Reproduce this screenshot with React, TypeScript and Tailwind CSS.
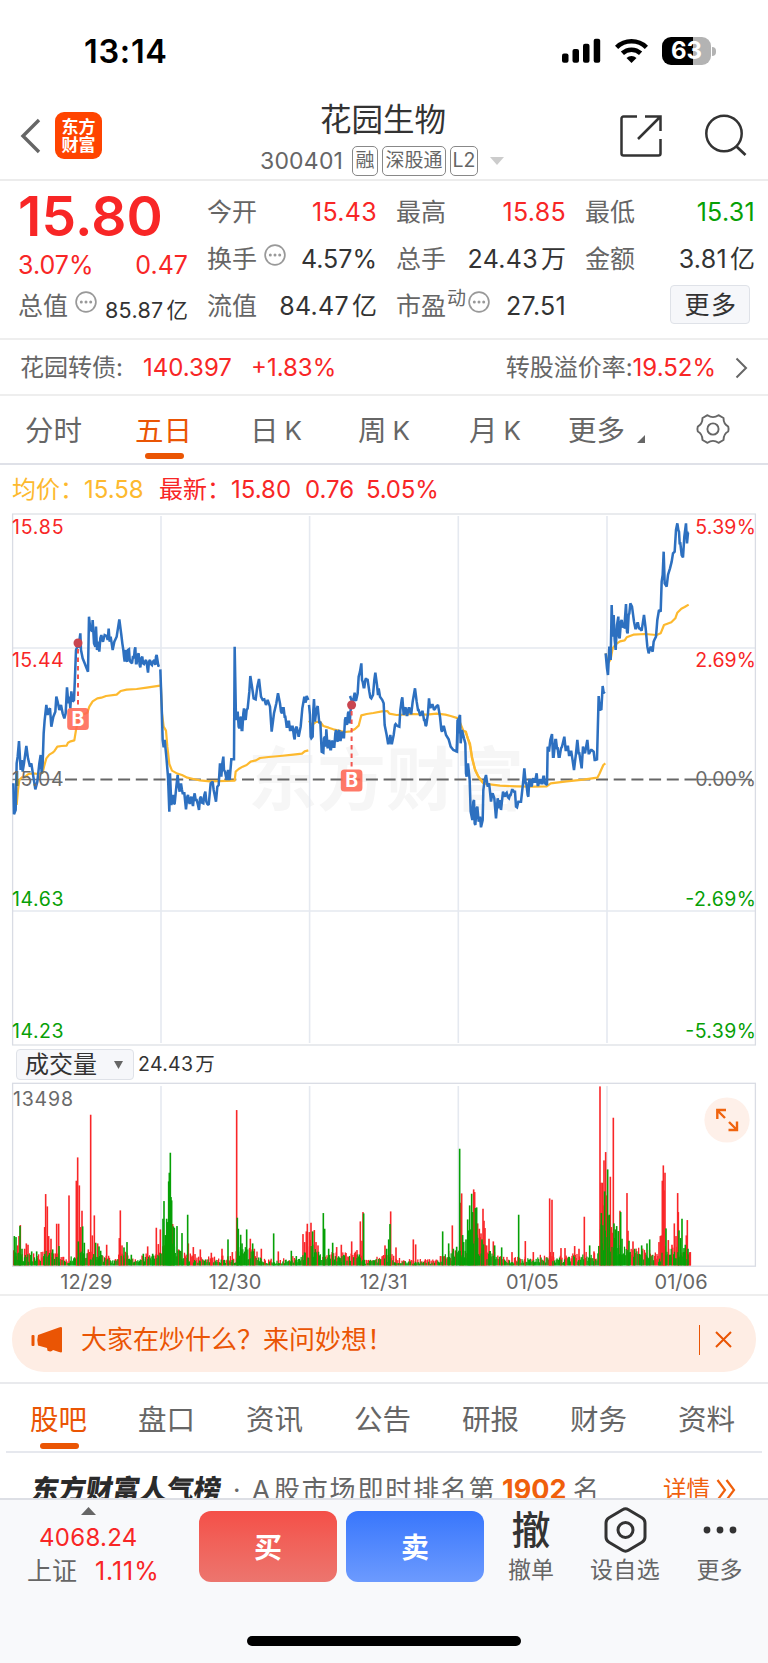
import React from "react";

type Stat = { label: string; value: string; unit?: string; tone?: string };

const DAY_1 =
  "40,850 42,943 47,930 50,790 53,770 57,723 62,810 65,780 68,815 72,790 79,738 84,775 90,800 94,790 100,830 106,868 112,845 118,790 122,765 125,820 128,790 131,700 134,660 139,615 143,645 146,630 150,625 154,680 160,650 166,635 169,590 173,605 178,630 183,615 188,640 193,655 197,640 201,562 205,610 208,590 211,625 214,574 218,605 222,600 225,530 228,450 232,440 236,440 241,400 243,450 248,475 254,490 258,500 264,515 267,350 270,380 276,395 278,360 282,430 286,440 288,380 291,450 294,425 298,455 301,415 304,405 307,420 309,425 314,405 320,408 323,420 326,386 329,425 332,410 335,430 338,450 343,425 350,410 358,358 364,405 367,430 370,450 372,470 374,485 378,450 380,482 382,485 384,450 387,448 389,478 391,485 396,490 399,468 402,475 404,450 406,442 408,490 410,490 413,465 416,460 419,495 421,502 424,475 427,470 429,490 432,492 435,485 438,480 441,495 444,518 447,485 450,480 453,492 456,495 459,485 463,480 466,495 468,470 470,465 475,497 479,498";
const DAY_2 =
  "481,508 485,620 488,720 491,742 494,720 499,770 504,830 508,935 510,820 514,915 517,890 519,885 522,912 524,910 527,880 529,860 533,825 536,860 539,875 543,850 546,870 548,880 553,880 558,928 562,890 564,885 567,905 569,912 572,895 574,890 577,910 579,918 582,890 584,880 587,900 590,900 594,915 597,930 600,895 603,890 606,908 610,910 613,885 616,875 619,905 622,912 626,915 632,850 638,845 641,870 643,880 648,905 652,860 656,855 660,790 664,830 667,790 670,770 672,810 675,815 680,840 684,810 687,835 689,840 694,778 702,778 704,440 708,660 711,640 713,635 716,680 718,685 721,655 723,650 725,690 727,690 730,640 732,625 735,655 737,660 740,630 743,625 748,575 751,528 756,560 761,595 767,598 772,560 777,537 783,590 788,600 793,598 798,615 803,600 810,620 815,695 822,640 829,610 834,580 840,610 843,635 846,640 848,625 851,625 854,650 856,650 860,680 862,680 865,665 867,665 870,690 872,690 875,680 878,680 882,710 884,718 887,685 890,680 896,710 902,680 907,625 913,590 917,608 920,588 925,600";
const DAY_3 =
  "27,315 30,345 32,410 34,415 38,410 40,330 42,297 45,365 49,330 53,318 58,370 61,365 65,455 70,458 72,415 75,410 77,440 79,388 83,445 86,425 88,420 91,448 93,448 96,425 98,422 101,440 103,440 106,400 108,390 111,420 113,425 116,395 118,390 120,420 122,420 125,400 127,395 130,412 132,412 135,360 137,352 141,375 144,340 146,335 149,370 153,315 156,305 150,288 158,310 164,278 166,300 168,302 173,280 176,230 180,215 184,190 186,240 188,245 191,262 193,262 196,240 198,235 201,240 203,240 208,275 211,292 214,295 219,285 223,240 226,218 231,255 234,285 236,265 240,290 247,300 251,310 254,375 260,405 264,430 266,430 271,405 274,430 276,430 281,405 285,375 287,372 292,378 298,380 301,330 305,300 307,292 311,345 315,325 317,322 320,345 322,345 326,325 328,325 332,340 334,340 338,305 345,265 350,305 354,330 356,330 360,345 362,345 366,335 368,335 372,360 374,360 377,378 379,375 384,340 387,295 390,322 392,322 396,315 398,315 402,330 406,325 408,320 414,315 420,350 424,390 426,395 430,380 432,380 438,405 446,418 452,440 460,450 471,455 474,355";
const DAY_4 =
  "20,757 23,660 26,700 28,650 30,645 32,730 36,690 42,715 46,730 48,820 50,830 54,790 59,840 62,935 67,960 70,905 72,900 74,970 76,975 80,925 82,920 86,965 88,955 90,950 93,982 98,960 100,870 104,840 108,825 113,860 117,850 119,865 123,905 126,885 128,880 133,895 138,955 143,895 148,925 151,900 153,930 159,875 163,885 165,890 168,880 170,878 174,892 177,895 180,885 182,885 186,870 188,870 192,875 195,875 198,920 201,922 205,905 207,905 213,905 219,850 223,805 227,850 229,850 233,885 235,890 238,840 240,840 245,860 248,840 250,835 253,845 255,845 260,820 263,855 265,855 269,840 271,840 274,850 276,850 280,830 282,830 284,850 286,850 291,855 293,740 297,755 301,720 306,702 309,770 311,770 316,720 318,720 321,745 323,745 326,770 329,770 333,745 336,740 343,710 347,750 349,750 352,740 354,740 357,765 359,765 362,755 364,755 372,810 378,760 382,720 386,760 388,760 395,805 399,740 403,755 405,760 412,720 416,760 418,760 423,750 425,750 431,755 434,780 436,780 441,778 446,588 449,625 454,630 458,558 461,578 465,575";
const DAY_5 =
  "467,460 471,505 474,525 478,440 482,480 485,315 488,410 491,345 494,420 497,450 501,375 505,350 507,410 509,415 513,365 515,360 518,380 523,382 528,312 531,395 533,400 536,345 538,340 541,310 546,320 552,365 556,385 558,385 562,370 564,370 567,385 569,385 575,392 582,345 587,385 592,440 596,460 602,440 608,455 611,425 613,420 618,410 622,360 627,330 632,335 635,245 638,225 641,155 644,250 650,260 654,225 660,205 665,185 669,160 674,155 678,90 682,70 685,90 687,95 689,130 691,130 695,165 699,172 703,110 708,70 711,130 714,98 716,98";

const AVG_1 =
  "50,915 54,870 58,840 66,832 76,830 85,822 100,820 115,822 128,818 132,800 139,775 148,764 158,758 164,752 172,740 185,738 200,737 204,728 212,724 223,721 228,690 235,660 245,645 262,638 268,620 278,604 292,595 304,593 318,588 350,584 362,573 380,569 410,567 440,563 480,557";
const AVG_2 =
  "482,540 486,640 491,680 498,692 502,740 508,792 516,812 532,821 546,825 562,833 580,837 600,841 630,844 704,842 707,815 716,807 728,800 740,795 752,785 768,781 780,774 806,771 840,768 880,764 906,761 914,754 925,751";
const AVG_3 =
  "27,362 35,376 48,366 60,365 70,378 86,383 100,388 116,392 135,396 152,394 165,387 176,377 184,346 200,342 220,339 246,334 262,333 268,341 290,345 340,342 380,344 410,341 436,344 452,348 475,355 490,392 498,395 502,412 510,430 516,470 524,505 534,528 548,546";
const AVG_4 =
  "45,693 52,710 60,738 66,775 76,812 88,835 100,850 120,853 150,857 200,859 250,860 290,859 302,850 350,844 400,839 442,833 448,822 460,795 466,790";
const AVG_5 =
  "467,460 474,490 482,478 488,445 497,433 510,424 524,421 530,412 550,404 585,402 620,405 632,400 642,375 664,367 676,355 682,338 694,326 704,321 716,314";

type Spike = [number, number, "r" | "g"];

const SPIKES: Spike[] = [
  [43, 88, "g"], [48, 85, "g"], [53, 60, "r"], [57, 88, "r"], [61, 121, "r"], [60, 118, "g"], [66, 50, "g"], [74, 50, "r"], [79, 66, "r"], [84, 62, "r"], [95, 42, "g"], [110, 42, "g"],
  [134, 115, "r"], [137, 214, "r"], [142, 177, "r"], [146, 88, "r"], [153, 80, "r"], [158, 48, "g"], [170, 125, "r"], [176, 125, "r"], [177, 58, "g"], [207, 210, "r"],
  [229, 254, "r"], [233, 324, "r"], [238, 240, "r"], [235, 72, "g"], [242, 115, "r"], [246, 164, "r"], [248, 117, "g"], [253, 68, "g"], [265, 48, "r"], [272, 452, "r"], [277, 90, "r"], [283, 150, "r"], [287, 68, "g"], [293, 66, "r"], [297, 57, "g"], [302, 44, "g"], [320, 62, "r"],
  [358, 82, "r"], [361, 165, "r"], [366, 60, "r"], [372, 54, "g"], [381, 70, "g"], [394, 32, "g"], [430, 35, "g"], [443, 57, "r"], [458, 35, "g"], [469, 113, "r"], [475, 64, "r"], [481, 108, "r"],
  [489, 140, "g"], [492, 193, "g"], [496, 91, "g"], [500, 140, "g"], [503, 130, "g"], [506, 252, "g"], [508, 278, "g"], [511, 338, "g"], [513, 205, "g"], [515, 195, "g"], [518, 124, "r"], [520, 117, "g"], [523, 113, "g"], [531, 118, "g"], [536, 48, "r"], [546, 97, "g"], [563, 152, "g"], [565, 66, "r"], [580, 55, "r"], [585, 34, "r"], [601, 48, "r"], [634, 38, "r"], [666, 50, "r"], [684, 78, "g"], [697, 40, "r"],
  [710, 466, "r"], [712, 143, "g"], [715, 110, "g"], [722, 92, "g"], [726, 66, "g"], [740, 108, "g"], [751, 80, "r"], [758, 66, "g"], [763, 50, "r"], [784, 50, "r"], [821, 96, "g"], [835, 42, "r"], [874, 44, "g"], [889, 28, "g"], [909, 94, "r"], [914, 70, "r"], [919, 102, "r"], [922, 125, "r"], [928, 100, "r"], [933, 128, "r"], [938, 102, "g"], [943, 106, "r"], [948, 70, "r"], [954, 60, "r"], [970, 157, "g"], [974, 110, "g"], [986, 50, "g"], [998, 68, "g"], [1010, 55, "r"], [1024, 62, "r"], [1055, 72, "r"], [1071, 46, "r"], [1081, 132, "r"], [1086, 74, "r"], [1089, 160, "r"], [1091, 156, "g"],
  [1155, 60, "r"], [1160, 50, "g"], [1166, 78, "g"], [1170, 124, "g"], [1172, 162, "r"], [1188, 54, "r"], [1240, 78, "r"], [1247, 63, "r"], [1328, 102, "g"], [1346, 66, "g"], [1357, 120, "r"], [1360, 50, "g"], [1370, 56, "g"],
  [1379, 350, "g"], [1382, 188, "r"], [1385, 216, "r"], [1388, 91, "g"], [1391, 70, "g"], [1398, 78, "g"], [1403, 138, "g"], [1406, 105, "g"], [1409, 180, "g"], [1412, 108, "g"], [1415, 215, "g"], [1418, 160, "g"], [1421, 228, "r"], [1424, 220, "r"], [1426, 172, "g"], [1430, 174, "g"], [1433, 126, "r"], [1438, 110, "r"], [1443, 96, "r"], [1446, 78, "g"], [1449, 170, "r"], [1452, 134, "r"], [1455, 112, "r"], [1460, 60, "r"], [1467, 80, "r"], [1480, 72, "r"], [1484, 60, "g"], [1505, 54, "g"], [1536, 40, "r"], [1556, 152, "g"], [1576, 73, "r"],
  [1600, 40, "r"], [1649, 201, "r"], [1656, 197, "r"], [1651, 40, "r"], [1660, 40, "r"], [1683, 52, "r"], [1695, 52, "r"], [1724, 58, "r"], [1737, 50, "r"], [1753, 146, "r"], [1769, 60, "g"], [1782, 42, "r"],
  [1800, 537, "r"], [1803, 248, "r"], [1804, 157, "g"], [1807, 248, "r"], [1809, 180, "r"], [1812, 315, "r"], [1814, 222, "g"], [1817, 340, "r"], [1820, 210, "r"], [1823, 288, "g"], [1826, 150, "r"], [1828, 152, "g"], [1831, 266, "r"], [1834, 115, "r"], [1837, 98, "r"], [1840, 443, "r"], [1842, 126, "g"], [1846, 108, "g"], [1850, 118, "g"], [1855, 103, "g"], [1860, 164, "r"], [1862, 160, "g"], [1866, 80, "g"], [1881, 217, "r"], [1884, 104, "r"], [1887, 74, "g"], [1899, 72, "r"], [1904, 50, "g"], [1925, 60, "g"], [1941, 66, "g"], [1949, 78, "g"],
  [1977, 70, "r"], [1981, 88, "r"], [1984, 90, "r"], [1987, 254, "r"], [1990, 300, "r"], [1992, 225, "r"], [1995, 278, "r"], [1998, 111, "g"], [2005, 76, "r"], [2016, 62, "r"], [2023, 126, "r"], [2028, 88, "r"], [2033, 217, "r"], [2035, 160, "r"], [2037, 105, "g"], [2042, 82, "g"], [2046, 140, "g"], [2052, 52, "g"], [2056, 62, "g"], [2059, 90, "r"], [2062, 136, "r"], [2064, 50, "g"], [2071, 40, "r"],
];

// Quiet trading volume between the peaks: [position, typical height]
const ENVELOPE: [number, number][] = [
  [40, 40], [90, 30], [120, 24], [135, 50], [180, 26], [200, 8], [225, 40], [265, 38], [295, 34], [315, 24], [345, 14], [370, 38], [390, 18], [440, 26], [485, 36], [500, 80], [520, 60], [550, 32], [600, 18], [660, 20], [705, 18], [715, 60], [760, 40], [800, 10], [860, 16], [905, 24], [930, 70], [950, 40], [970, 34], [1020, 28], [1080, 34], [1095, 14], [1180, 26], [1200, 12], [1310, 10], [1330, 30], [1375, 44], [1400, 45], [1420, 110], [1445, 66], [1470, 40], [1510, 18], [1550, 16], [1600, 22], [1660, 22], [1700, 22], [1730, 30], [1790, 32], [1805, 130], [1840, 90], [1865, 60], [1900, 44], [1950, 36], [1975, 26], [2000, 50], [2025, 44], [2050, 50], [2072, 36],
];

function envelopeAt(x: number) {
  for (let i = 1; i < ENVELOPE.length; i++) {
    const [x1, h1] = ENVELOPE[i];
    const [x0, h0] = ENVELOPE[i - 1];
    if (x <= x1) return h0 + ((h1 - h0) * (x - x0)) / (x1 - x0);
  }
  return 30;
}

function quietBars(): Spike[] {
  const out: Spike[] = [];
  let seed = 20260106;
  const next = () => {
    seed = (seed * 1103515245 + 12345) % 2147483648;
    return seed / 2147483648;
  };
  for (let x = 41; x < 2073; x += 2.5) {
    const e = envelopeAt(x);
    const a = next();
    const b = next();
    out.push([x, Math.max(4, e * (0.35 + a * 0.75)), b < 0.36 ? "r" : "g"]);
  }
  return out;
}

const QUIET = quietBars();

function Line({ pts, avg = false }: { pts: string; avg?: boolean }) {
  return (
    <polyline
      points={pts}
      fill="none"
      stroke={avg ? "#fdb92e" : "#2d70c0"}
      strokeWidth={avg ? 6.6 : 7.6}
      strokeLinejoin={avg ? "round" : "miter"}
      strokeMiterlimit={2}
    />
  );
}

function Marker({ x, dotY, boxY }: { x: number; dotY: number; boxY: number }) {
  return (
    <g>
      <line x1={x} x2={x} y1={dotY + 6} y2={boxY - 1} stroke="#f2554f" strokeWidth="2" strokeDasharray="4.5 4" />
      <circle cx={x} cy={dotY} r="4.5" fill="#c9454f" />
      <rect x={x - 10.8} y={boxY} width="21.6" height="22" rx="3.5" fill="#ff6552" fillOpacity=".87" />
      <text x={x} y={boxY + 17.8} textAnchor="middle" fontSize="19.5" fontWeight="700" fill="#fff">B</text>
    </g>
  );
}

function PriceChart() {
  const left: [number, string, string][] = [
    [534, "15.85", "#f82626"], [666.5, "15.44", "#f82626"], [786, "15.04", "#6a6a6a"], [905.7, "14.63", "#07a006"], [1037.7, "14.23", "#07a006"],
  ];
  const right: [number, string, string][] = [
    [534, "5.39%", "#f82626"], [666.5, "2.69%", "#f82626"], [786, "0.00%", "#6a6a6a"], [905.7, "-2.69%", "#07a006"], [1037.7, "-5.39%", "#07a006"],
  ];
  return (
    <svg className="block h-[535px] w-full" viewBox="0 512 768 535" fontFamily="Inter, 'Noto Sans CJK SC', sans-serif">
      <text x="386" y="805" textAnchor="middle" fontSize="69" fontWeight="700" fill="#f6f6f6">东方财富</text>
      <path d="M161 516V1043M309.6 516V1043M458.3 516V1043M607 516V1043M12.5 648H755M12.5 911H755" stroke="#e5e9f0" strokeWidth="1.6" />
      <path d="M12 514H756M12 1045H756" stroke="#e9ebee" strokeWidth="2" />
      <path d="M12.6 514V1045M755.4 514V1045" stroke="#d9dce4" strokeWidth="1.3" />
      <path d="M12.5 779.5H60" stroke="#777" strokeWidth="1.6" />
      <path d="M65 779.5H696" stroke="#666" strokeWidth="2" strokeDasharray="12 5.7" />
      <path d="M696 779.5H752" stroke="#777" strokeWidth="1.6" />
      <g transform="translate(0 500) scale(.33333)">
        <Line pts={AVG_1} avg />
        <Line pts={AVG_2} avg />
        <Line pts={DAY_1} />
        <Line pts={DAY_2} />
      </g>
      <g transform="translate(300 600) scale(.33333)">
        <Line pts={AVG_3} avg />
        <Line pts={DAY_3} />
      </g>
      <g transform="translate(450 500) scale(.33333)">
        <Line pts={AVG_4} avg />
        <Line pts={AVG_5} avg />
        <Line pts={DAY_4} />
        <Line pts={DAY_5} />
      </g>
      <Marker x={78} dotY={643} boxY={708} />
      <Marker x={351.6} dotY={705} boxY={769.4} />
      {left.map(([y, t, c]) => (
        <text key={t} x="12" y={y} fontSize="19.5" fill={c} textLength="51.5">{t}</text>
      ))}
      {right.map(([y, t, c]) => (
        <text key={t} x="755.8" y={y} fontSize="19.5" fill={c} textAnchor="end" textLength={t.startsWith("-") ? 70.5 : 60.5}>{t}</text>
      ))}
    </svg>
  );
}

function VolumeChart() {
  return (
    <svg className="block h-[187px] w-full" viewBox="0 1081 768 187" fontFamily="Inter, sans-serif">
      <path d="M161 1086V1265M309.6 1086V1265M458.3 1086V1265M607 1086V1265" stroke="#e5e9f0" strokeWidth="1.6" />
      <rect x="12.6" y="1083.3" width="742.8" height="182.9" fill="none" stroke="#d9dce4" strokeWidth="1.3" />
      <g transform="translate(0 1265.4) scale(.33333)">
        {QUIET.filter((b) => b[2] === "r").map(([x, h], i) => (
          <rect key={i} x={x - 2} y={-h - 8} width="4" height={h + 8} fill="#f92628" />
        ))}
        {SPIKES.filter((b) => b[2] === "r").map(([x, h], i) => (
          <rect key={i} x={x - 2.4} y={-h} width="4.8" height={h} fill="#f92628" />
        ))}
        {QUIET.filter((b) => b[2] === "g").map(([x, h], i) => (
          <rect key={i} x={x - 1.8} y={-h} width="3.6" height={h} fill="#06a006" />
        ))}
        {SPIKES.filter((b) => b[2] === "g").map(([x, h], i) => (
          <rect key={i} x={x - 2.4} y={-h} width="4.8" height={h} fill="#06a006" />
        ))}
      </g>
      <text x="13" y="1105.8" fontSize="19.5" fill="#6a6a6a" textLength="60">13498</text>
      <circle cx="727" cy="1120" r="22.6" fill="#fef0e9" />
      <path d="M726 1110H717.300V1119M717.5 1110.5L725 1118M737 1121.500V1130H728.500M736.500 1129.500L729 1122" fill="none" stroke="#f0640f" strokeWidth="2.400" />
    </svg>
  );
}

function Info({ className = "" }: { className?: string }) {
  return (
    <svg className={`size-[22px] shrink-0 ${className}`} viewBox="0 0 22 22">
      <circle cx="11" cy="11" r="9.9" fill="none" stroke="#999" strokeWidth="1.7" />
      <circle cx="6.300" cy="11" r="1.500" fill="#999" />
      <circle cx="11" cy="11" r="1.500" fill="#999" />
      <circle cx="15.700" cy="11" r="1.500" fill="#999" />
    </svg>
  );
}

function StatCell({ label, value, unit, tone = "" }: Stat) {
  return (
    <div className="flex h-[47px] items-center">
      <span className="text-[#666]">{label}</span>
      <span className={`ml-auto tracking-[0.3px] ${tone}`}>{value}</span>
      {unit && <span className="ml-[3px]">{unit}</span>}
    </div>
  );
}

function StatusBar() {
  return (
    <div className="flex h-[94px] items-start justify-between pt-[35px] pr-[52px] pl-[84px]">
      <div className="text-[32.500px] leading-[34px] font-semibold tracking-[0.700px] text-black">13:14</div>
      <div className="flex items-center pt-[2px]">
        <svg className="h-[28px] w-[39px]" viewBox="0 0 39 28">
          <rect x="0" y="16.500" width="6.500" height="9.300" rx="2" />
          <rect x="10.500" y="12" width="6.500" height="13.800" rx="2" />
          <rect x="21" y="6.800" width="6.500" height="19" rx="2" />
          <rect x="31.700" y="1.700" width="6.500" height="24.100" rx="2" />
        </svg>
        <svg className="ml-[14px] h-[28px] w-[33px]" viewBox="0 0 33 28">
          <path d="M1.600 10.300a21.500 21.500 0 0 1 29.800 0" fill="none" stroke="#000" strokeWidth="4.600" />
          <path d="M7.400 16.300a13.300 13.300 0 0 1 18.200 0" fill="none" stroke="#000" strokeWidth="4.600" />
          <path d="M16.500 26l-5-5a7.500 7.500 0 0 1 10 0z" />
        </svg>
        <div className="ml-[14px] flex h-[28px] w-[49px] items-center justify-center rounded-[9px] bg-linear-to-r from-black from-63% to-[#b3b3b3] to-63% text-[24px] leading-[28px] font-bold text-white">63</div>
        <div className="ml-[1px] h-[9px] w-[4px] rounded-r-full bg-[#b3b3b3]" />
      </div>
    </div>
  );
}

function NavBar() {
  return (
    <div className="flex h-[87px] items-start border-b-2 border-[#ececec]">
      <svg className="mt-[24px] ml-[19px] h-[36px] w-[22px]" viewBox="0 0 22 36">
        <path d="M20 2L4 18l16 16" fill="none" stroke="#666" strokeWidth="3.400" />
      </svg>
      <div className="mt-[18px] ml-[14px] flex size-[47px] flex-col items-center justify-center rounded-[9px] bg-[#ff4400] text-[17px] leading-[18px] font-bold text-white">
        <span>东方</span>
        <span>财富</span>
      </div>
      <div className="ml-[158px] flex w-[246px] flex-col">
        <div className="pl-[60px] text-[31.500px] leading-[52px] text-[#333]">花园生物</div>
        <div className="flex h-[30px] items-center text-[#666]">
          <span className="w-[92px] text-[23px] tracking-[0.200px] whitespace-nowrap">300401</span>
          <span className="flex h-[30px] w-[26px] items-center justify-center rounded-[5px] border border-[#888] text-[19px]">融</span>
          <span className="ml-[4px] flex h-[30px] w-[64px] items-center justify-center rounded-[5px] border border-[#888] text-[19px] whitespace-nowrap">深股通</span>
          <span className="ml-[4px] flex h-[30px] w-[28px] items-center justify-center rounded-[5px] border border-[#888] text-[19.500px]">L2</span>
          <svg className="ml-[12px] h-[8px] w-[14px]" viewBox="0 0 14 8"><path d="M0 0h14L7 8z" fill="#ccc" /></svg>
        </div>
      </div>
      <svg className="mt-[20px] ml-[113px] size-[44px]" viewBox="0 0 44 44">
        <path d="M18 2.500H4.500a2 2 0 0 0-2 2V39.500a2 2 0 0 0 2 2H39.500a2 2 0 0 0 2-2V25M26 2.500H41.500V17M41 3L19 25" fill="none" stroke="#333" strokeWidth="2.500" />
      </svg>
      <svg className="mt-[20px] ml-[41px] size-[44px]" viewBox="0 0 44 44">
        <circle cx="20" cy="19.500" r="17.700" fill="none" stroke="#333" strokeWidth="2.500" />
        <path d="M32 32l9.500 9" stroke="#333" strokeWidth="2.800" />
      </svg>
    </div>
  );
}

function Quote() {
  return (
    <div className="grid h-[159px] grid-cols-[170px_170px_170px_170px] gap-x-[19px] border-b-2 border-[#eee] pt-[8px] pl-[18px] text-[25px] text-[#333]">
      <div className="flex flex-col">
        <div className="h-[54px] text-[55px] leading-[54px] font-semibold tracking-[0.200px] text-[#f82626]">15.80</div>
        <div className="flex h-[46px] items-center justify-between text-[#f82626]">
          <span>3.07%</span>
          <span>0.47</span>
        </div>
        <div className="flex h-[36px] items-center">
          <span className="text-[#666]">总值</span>
          <Info className="mb-[10px] ml-[7px]" />
          <span className="mt-[6px] ml-auto text-[21.500px] tracking-[0.300px]">85.87</span>
          <span className="mt-[6px] ml-[3px] text-[21.500px]">亿</span>
        </div>
      </div>
      <div>
        <StatCell label="今开" value="15.43" tone="text-[#f82626]" />
        <div className="flex h-[47px] items-center">
          <span className="text-[#666]">换手</span>
          <Info className="mb-[10px] ml-[7px]" />
          <span className="ml-auto">4.57%</span>
        </div>
        <StatCell label="流值" value="84.47" unit="亿" />
      </div>
      <div>
        <StatCell label="最高" value="15.85" tone="text-[#f82626]" />
        <StatCell label="总手" value="24.43" unit="万" />
        <div className="flex h-[47px] items-center">
          <span className="text-[#666]">市盈</span>
          <span className="mb-[14px] ml-[1px] text-[19px] text-[#666]">动</span>
          <Info className="mb-[10px] ml-[2px]" />
          <span className="ml-auto tracking-[0.300px]">27.51</span>
        </div>
      </div>
      <div>
        <StatCell label="最低" value="15.31" tone="text-[#07a006]" />
        <StatCell label="金额" value="3.81" unit="亿" />
        <div className="mt-[2px] mr-[5px] ml-auto flex h-[39px] w-[80px] items-center justify-center rounded-[4px] border border-[#dfe2e8] bg-[#f6f7fa] pt-[2px] pl-[2px] tracking-[1.500px]">更多</div>
      </div>
    </div>
  );
}

function ConvertibleRow() {
  return (
    <div className="flex h-[56px] items-center border-b-2 border-[#eee] pt-[1px] pr-[20px] pl-[20px] text-[24px] text-[#f82626]">
      <span className="w-[123px] text-[#666]">花园转债:</span>
      <span className="w-[108px]">140.397</span>
      <span>+1.83%</span>
      <span className="ml-auto text-[#666]">转股溢价率:</span>
      <span>19.52%</span>
      <svg className="ml-[19px] h-[22px] w-[13px]" viewBox="0 0 13 22"><path d="M1.500 1.500L11 11l-9.500 9.500" fill="none" stroke="#666" strokeWidth="2" /></svg>
    </div>
  );
}

function KTab({ name }: { name: string }) {
  return (
    <span className="flex gap-[6px]">
      <span>{name}</span>
      <span className="text-[26px]">K</span>
    </span>
  );
}

function PeriodTabs() {
  return (
    <div className="flex h-[69px] items-start border-b-2 border-[#dfe1e8] pt-[15px] pl-[25px] text-[28.500px] leading-[40px] text-[#666]">
      <span className="w-[110px]">分时</span>
      <span className="flex w-[115px] flex-col text-[#ea5504]">
        五日
        <i className="mt-[2px] ml-[10px] h-[6px] w-[39px] rounded-[3px] bg-[#ea5504]" />
      </span>
      <div className="w-[108px]"><KTab name="日" /></div>
      <div className="w-[111px]"><KTab name="周" /></div>
      <div className="w-[99px]"><KTab name="月" /></div>
      <span className="flex">
        更多
        <svg className="mt-[24px] ml-[12px] size-[8px]" viewBox="0 0 8 8"><path d="M8 0v8H0z" fill="#666" /></svg>
      </span>
      <svg className="mt-[2px] ml-[51px] h-[32px] w-[34px]" viewBox="0 0 34 32" fill="none" stroke="#666" strokeWidth="1.900" strokeLinejoin="round">
        <path d="M11.500 2.200Q17 6 22.500 2.200L27.500 5Q27.500 11 32.200 13.500Q33 16 32.200 18.500Q27.500 21 27.500 27L22.500 29.800Q17 26 11.500 29.800L6.500 27Q6.500 21 1.800 18.500Q1 16 1.800 13.500Q6.500 11 6.500 5Z" />
        <circle cx="17" cy="16" r="5.600" />
      </svg>
    </div>
  );
}

function Legend() {
  return (
    <div className="flex h-[47px] items-center pt-[2px] pl-[12px] text-[24px] whitespace-nowrap text-[#f82626]">
      <span className="w-[72px] text-[#fdb92e]">均价：</span>
      <span className="w-[75px] text-[#fdb92e]">15.58</span>
      <span className="w-[72px]">最新：</span>
      <span className="w-[74px]">15.80</span>
      <span className="w-[61px]">0.76</span>
      <span className="tracking-[-0.200px]">5.05%</span>
    </div>
  );
}

function AskBanner() {
  return (
    <div className="mx-[12px] mt-[11px] flex h-[65px] items-center rounded-[32px] bg-[#feede4] pr-[24px] pl-[19px] text-[#ea5504]">
      <svg className="h-[28px] w-[32px]" viewBox="0 0 32 28" fill="#ea5504">
        <rect x="0.500" y="9" width="3" height="11" rx="1" />
        <path d="M7 9L28 1.500Q31 .5 31 2V25.500Q31 27 28 26L22 24Q20.500 26.500 16.500 24.800L16 22L7 19.500Q5.500 14 7 9Z" />
      </svg>
      <span className="ml-[18px] text-[26px]">大家在炒什么？来问妙想！</span>
      <i className="ml-auto h-[30px] w-[1.500px] bg-[#ea5504]" />
      <svg className="ml-[15px] size-[17px]" viewBox="0 0 17 17"><path d="M1 1l15 15M16 1L1 16" stroke="#ea5504" strokeWidth="2" /></svg>
    </div>
  );
}

function SectionTabs() {
  const tabs = ["盘口", "资讯", "公告", "研报", "财务", "资料"];
  return (
    <div className="mx-[6px] flex h-[69px] items-start gap-[51px] border-b-2 border-[#e6e8ee] pt-[16px] pl-[24px] text-[28.500px] leading-[40px] text-[#666]">
      <span className="flex flex-col text-[#ea5504]">
        股吧
        <i className="mt-[3px] ml-[10px] h-[6px] w-[39px] rounded-[3px] bg-[#ea5504]" />
      </span>
      {tabs.map((t) => (
        <span key={t}>{t}</span>
      ))}
    </div>
  );
}

function RankRow() {
  return (
    <div className="flex h-[45px] items-start overflow-hidden pt-[17px] pr-[32px] pl-[32px] text-[26px] leading-[40px] whitespace-nowrap text-[#666]">
      <span className="w-[201px] -skew-x-8 text-[27px] font-black text-[#2b2b2b]">东方财富人气榜</span>
      <span className="w-[19px]">·</span>
      <span className="w-[22px]">A</span>
      <span className="w-[228px] tracking-[1.800px]">股市场即时排名第</span>
      <span className="w-[71px] text-[27px] font-bold text-[#f0600c]">1902</span>
      <span>名</span>
      <span className="ml-auto text-[23.500px] text-[#f0600c]">详情</span>
      <svg className="mt-[9px] ml-[6px] h-[22px] w-[20px]" viewBox="0 0 20 22"><path d="M1.500 1L9 11 1.500 21M10.500 1L18 11l-7.500 10" fill="none" stroke="#f0600c" strokeWidth="2.200" /></svg>
    </div>
  );
}

function ActionBar() {
  return (
    <div className="flex h-[165px] flex-col border-t-2 border-[#dddfe5] bg-[#f8f9fb]">
      <div className="flex h-[90px] items-start text-[23px] text-[#666]">
        <div className="flex w-[199px] flex-col text-[#f82626]">
          <svg className="mt-[7px] ml-[81px] h-[8px] w-[15px]" viewBox="0 0 15 8"><path d="M7.500 0L15 8H0z" fill="#666" /></svg>
          <span className="mt-[7px] ml-[39px] text-[24px] leading-[32px] tracking-[0.300px]">4068.24</span>
          <div className="ml-[27px] flex text-[25px] leading-[34px]">
            <span className="w-[68px] text-[#666]">上证</span>
            <span className="tracking-[0.900px]">1.11%</span>
          </div>
        </div>
        <div className="mt-[11px] flex h-[71px] w-[138px] items-center justify-center rounded-[12px] bg-linear-to-b from-[#f44f48] to-[#ec756e] pt-[2px] text-[28px] font-bold text-white">买</div>
        <div className="mt-[11px] ml-[9px] flex h-[71px] w-[138px] items-center justify-center rounded-[12px] bg-linear-to-b from-[#3876fc] to-[#6c9afe] pt-[2px] text-[28px] font-bold text-white">卖</div>
        <div className="ml-[23px] flex w-[48px] flex-col items-center">
          <span className="mt-[8px] text-[39px] leading-[44px] font-medium text-[#333]">撤</span>
          <span className="mt-[2px] leading-[32px]">撤单</span>
        </div>
        <div className="ml-[35px] flex w-[70px] flex-col items-center whitespace-nowrap">
          <svg className="mt-[7px] h-[46px] w-[43px]" viewBox="0 0 43 46" fill="none" stroke="#333" strokeWidth="3">
            <path d="M18.500 2.700Q21.500 1 24.500 2.700L38 10.700Q41 12.500 41 16V30Q41 33.500 38 35.300L24.500 43.300Q21.500 45 18.500 43.300L5 35.300Q2 33.500 2 30V16Q2 12.500 5 10.700Z" />
            <circle cx="21.500" cy="23" r="7.500" />
          </svg>
          <span className="mt-[1px] leading-[32px] tracking-[0.300px]">设自选</span>
        </div>
        <div className="ml-[36px] flex w-[47px] flex-col items-center">
          <svg className="mt-[7px] h-[46px] w-[34px]" viewBox="0 0 34 46" fill="#333">
            <circle cx="4" cy="23" r="3.400" />
            <circle cx="17" cy="23" r="3.400" />
            <circle cx="30" cy="23" r="3.400" />
          </svg>
          <span className="mt-[1px] leading-[32px]">更多</span>
        </div>
      </div>
      <div className="mx-auto mt-[46px] h-[10px] w-[274px] rounded-full bg-black" />
    </div>
  );
}

export default function App() {
  return (
    <div className="flex h-[1663px] w-[768px] flex-col overflow-hidden bg-white font-['Inter','Noto_Sans_CJK_SC',sans-serif]">
      <StatusBar />
      <NavBar />
      <Quote />
      <ConvertibleRow />
      <PeriodTabs />
      <Legend />
      <PriceChart />
      <div className="flex h-[34px] items-center pt-[1px] pl-[16px] text-[#333]">
        <div className="flex h-[31px] w-[118px] items-center justify-between rounded-[4px] border border-[#dfe2e8] bg-[#f6f7fa] pr-[10px] pl-[8px] text-[24px]">
          成交量
          <svg className="h-[8px] w-[9px]" viewBox="0 0 9 8"><path d="M0 0h9L4.500 8z" fill="#666" /></svg>
        </div>
        <span className="ml-[4px] text-[19.500px] tracking-[0.300px]">24.43</span>
        <span className="ml-[2px] text-[19.500px]">万</span>
      </div>
      <VolumeChart />
      <div className="flex h-[28px] border-b-2 border-[#eee] pl-[12px] text-[20px] leading-[29px] text-[#666]">
        {["12/29", "12/30", "12/31", "01/05", "01/06"].map((d) => (
          <span key={d} className="w-[148.700px] text-center">{d}</span>
        ))}
      </div>
      <AskBanner />
      <div className="mt-[10px] h-[2px] shrink-0 bg-[#e9eaed]" />
      <SectionTabs />
      <RankRow />
      <ActionBar />
    </div>
  );
}
